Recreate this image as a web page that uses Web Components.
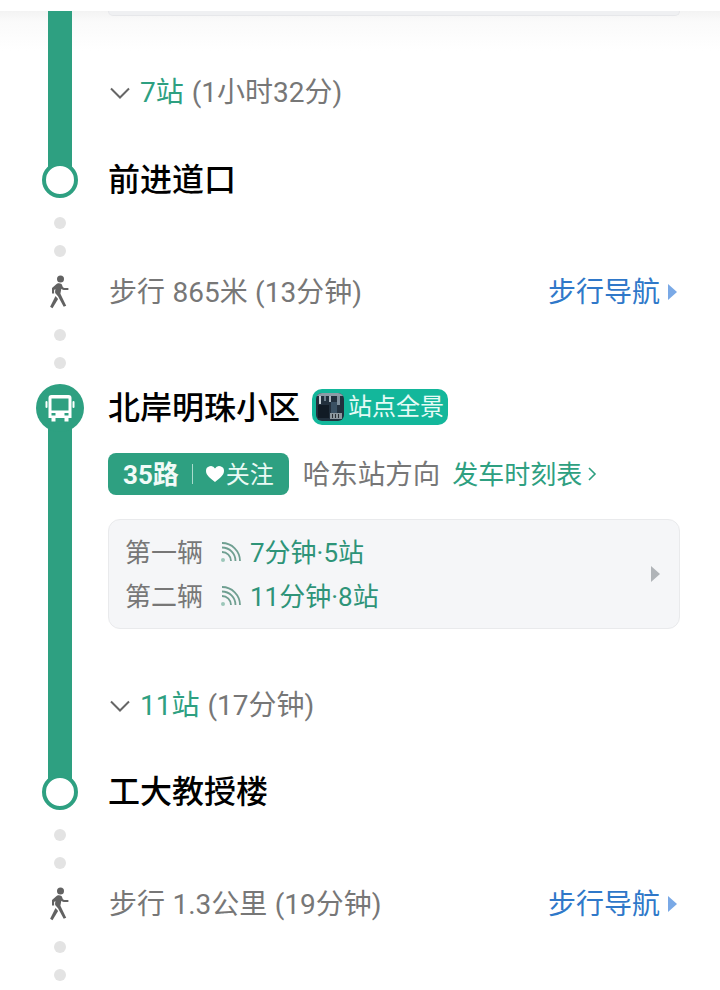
<!DOCTYPE html>
<html lang="zh">
<head>
<meta charset="utf-8">
<title>线路详情</title>
<style>
  html, body { margin: 0; padding: 0; background: #fff; }
  body { font-family: Roboto, "Noto Sans CJK SC", sans-serif; }
</style>
</head>
<body>
<route-page>
  <ride-leg count="7站" time="(1小时32分)" stub></ride-leg>
  <stop-row name="前进道口"></stop-row>
  <walk-leg text="步行 865米 (13分钟)"></walk-leg>
  <stop-row name="北岸明珠小区" kind="bus">
    <pano-badge>站点全景</pano-badge>
  </stop-row>
  <ride-leg count="11站" time="(17分钟)">
    <line-info line="35路" direction="哈东站方向"></line-info>
    <arrival-card>
      <arrival-row label="第一辆" eta="7分钟·5站"></arrival-row>
      <arrival-row label="第二辆" eta="11分钟·8站"></arrival-row>
    </arrival-card>
  </ride-leg>
  <stop-row name="工大教授楼"></stop-row>
  <walk-leg text="步行 1.3公里 (19分钟)"></walk-leg>
</route-page>

<script>
(function () {
  const FONT = 'Roboto, "Noto Sans CJK SC", sans-serif';

  class RoutePage extends HTMLElement {
    constructor() {
      super();
      this.attachShadow({ mode: 'open' }).innerHTML = `
        <style>
          :host {
            display: block; width: 720px; height: 990px; overflow: hidden;
            box-sizing: border-box; padding-top: 11px;
            font-family: ${FONT};
            background:
              linear-gradient(#f3f3f3, #fafafa 10px, #fff 40px) 0 11px / 100% 40px no-repeat,
              #fff;
          }
        </style>
        <slot></slot>`;
    }
  }

  class RideLeg extends HTMLElement {
    constructor() {
      super();
      const stub = this.hasAttribute('stub');
      this.attachShadow({ mode: 'open' }).innerHTML = `
        <style>
          :host { display: grid; grid-template-columns: 108px 1fr; }
          /* bar runs a little under the stop markers on both ends */
          .bar {
            width: 24px; margin: ${stub ? 0 : -6}px 0 0 48px; background: #2ea081;
            align-self: start; height: calc(100% + ${stub ? 6 : 12}px);
          }
          .body { padding: ${stub ? 0 : 21}px 40px ${stub ? 50 : 49}px 0; min-width: 0; }
          .stub {
            height: 5px; margin-bottom: 56px; box-sizing: border-box;
            background: #eff0f2; border: 1px solid #e6e7ea; border-top: 0;
            border-radius: 0 0 10px 10px;
          }
          .gap {
            display: flex; align-items: center; height: 40px; box-sizing: border-box; padding-bottom: 4px;
            font-size: 28px; color: #777; white-space: nowrap;
          }
          .gap svg { width: 24px; height: 14px; margin: 6px 8px 0 0; flex: none; }
          .count { color: #2ea081; margin-right: 8px; }
          ::slotted(arrival-card) { margin: 24px 0 56px; }
        </style>
        <div class="bar"></div>
        <div class="body">
          ${stub ? '<div class="stub"></div>' : ''}
          <slot></slot>
          <div class="gap">
            <svg viewBox="0 0 24 14"><path d="M3 2.500l9 9 9-9" fill="none" stroke="#666" stroke-width="2"/></svg>
            <span class="count">${this.getAttribute('count')}</span>
            <span>${this.getAttribute('time')}</span>
          </div>
        </div>`;
    }
  }

  class StopRow extends HTMLElement {
    constructor() {
      super();
      const bus = this.getAttribute('kind') === 'bus';
      const node = bus
        ? `<svg class="bus" viewBox="0 0 48 48">
             <circle cx="24" cy="24" r="24" fill="#2ea081"/>
             <path fill="#fff" fill-rule="evenodd" d="M15.500 11h17a3 3 0 0 1 3 3v20h-3v3.500h-4V34h-9v3.500h-4V34h-3V14a3 3 0 0 1 3-3zM15.500 14.500v12h17v-12zM15.500 29v2.500h4V29zM28.500 29v2.500h4V29z"/>
             <rect x="9.500" y="17" width="2" height="7" rx="1" fill="#fff"/>
             <rect x="36.500" y="17" width="2" height="7" rx="1" fill="#fff"/>
           </svg>`
        : '<span class="ring"></span>';
      const h = bus ? 48 : 36;
      this.attachShadow({ mode: 'open' }).innerHTML = `
        <style>
          :host { display: grid; grid-template: ${h}px / 108px 1fr; height: ${h}px; position: relative; }
          .node { display: flex; justify-content: center; align-items: center; width: 48px; margin-left: 36px; }
          .ring {
            width: 36px; height: 36px; box-sizing: border-box;
            border: 4px solid #2ea081; border-radius: 50%; background: #fff;
          }
          .bus { width: 48px; height: 48px; display: block; }
          .main { display: flex; align-items: center; gap: 12px; white-space: nowrap; }
          .name { font-size: 32px; line-height: 40px; font-weight: 500; color: #000; }
          ::slotted(pano-badge) { margin-bottom: 2px; }
        </style>
        <div class="node">${node}</div>
        <div class="main">
          <span class="name">${this.getAttribute('name')}</span>
          <slot></slot>
        </div>`;
    }
  }

  class WalkLeg extends HTMLElement {
    constructor() {
      super();
      this.attachShadow({ mode: 'open' }).innerHTML = `
        <style>
          :host { display: block; padding: 19px 43px 15px 0; }
          .dots { display: flex; flex-direction: column; gap: 16px; width: 12px; margin-left: 54px; }
          .dots i { display: block; width: 12px; height: 12px; border-radius: 50%; background: #e3e3e3; }
          .row {
            display: grid; grid-template: 40px / 108px 1fr auto; align-items: center;
            height: 40px; margin: 15px 0 17px; white-space: nowrap;
          }
          .row svg { width: 28px; height: 34px; margin-left: 46px; display: block; }
          .text { font-size: 28px; color: #777; padding-bottom: 4px; margin-left: 1px; word-spacing: .5px; }
          .link { display: flex; align-items: center; font-size: 28px; color: #2f78c9; padding-bottom: 4px; }
          .link i {
            display: block; width: 0; height: 0; margin: 4px 0 0 8px;
            border-left: 9px solid #7aa9e6; border-top: 8px solid transparent; border-bottom: 8px solid transparent;
          }
        </style>
        <div class="dots"><i></i><i></i></div>
        <div class="row">
          <svg viewBox="0 0 28 34">
            <circle cx="14.500" cy="4" r="3.500" fill="#626262"/>
            <path fill="#626262" d="M10 9.500c1.200-1.400 3.500-1.700 5-.7 1 .7 1.300 1.900 1.700 3 .3.800.9 1.100 1.700 1.100h4v2h-4.700c-1 0-1.800-.5-2.400-1.200l-.9 5 5.800 12 -2.500 1.100-5.700-10.600-2.200-2.500c-.7-.8-.8-1.500-.7-2.300l.3-2.500-1.300 1v3.500H6v-5.300z"/>
            <path fill="#626262" d="M9.500 21l2.600 2.900-5.600 9.400-2.400-1.500z"/>
          </svg>
          <span class="text">${this.getAttribute('text')}</span>
          <span class="link">步行导航<i></i></span>
        </div>
        <div class="dots"><i></i><i></i></div>`;
    }
  }

  class PanoBadge extends HTMLElement {
    constructor() {
      super();
      this.attachShadow({ mode: 'open' }).innerHTML = `
        <style>
          :host {
            display: flex; align-items: center; height: 36px; box-sizing: border-box;
            padding: 0 4px; border-radius: 10px; background: #13b79b;
            color: #e6fbf6; font-size: 24px; line-height: 36px; white-space: nowrap;
          }
          svg { width: 28px; height: 28px; display: block; margin-right: 4px; border-radius: 6px; }
        </style>
        <svg viewBox="0 0 28 28">
          <rect width="28" height="28" fill="#22303d"/>
          <rect width="28" height="3" fill="#8d9ba6"/>
          <rect x="3" y="3" width="2" height="8" fill="#c4ced5"/>
          <rect x="8" y="3" width="2" height="5" fill="#6f808d"/>
          <rect x="13" y="3" width="2" height="6" fill="#aab6bf"/>
          <rect x="21" y="3" width="3" height="9" fill="#7f909c"/>
          <rect x="2" y="12" width="11" height="13" fill="#111b25"/>
          <rect x="15" y="9" width="6" height="11" fill="#3a5163"/>
          <rect x="14" y="20" width="12" height="6" fill="#8b969d"/>
          <rect x="16" y="21" width="1" height="4" fill="#2a2f33"/>
          <rect x="19" y="21" width="1" height="4" fill="#2a2f33"/>
          <rect x="22" y="21" width="1" height="4" fill="#2a2f33"/>
        </svg>
        <slot></slot>`;
    }
  }

  class LineInfo extends HTMLElement {
    constructor() {
      super();
      this.attachShadow({ mode: 'open' }).innerHTML = `
        <style>
          :host { display: flex; align-items: center; height: 42px; white-space: nowrap; }
          .chip {
            display: flex; align-items: center; height: 42px; box-sizing: border-box;
            padding: 0 15px 4px 15px; border-radius: 8px; background: #2ea081; color: #fff;
          }
          .line { font-size: 26px; font-weight: 700; color: #f2fbf8; }
          .sep { width: 1px; height: 20px; background: #a9dccd; margin: 4px 13px 0; }
          .chip svg { width: 18px; height: 16px; display: block; margin: 4px 2px 0 0; }
          .follow { font-size: 24px; color: #eafaf5; }
          .dir { font-size: 27.500px; color: #777; margin: 0 12px 0 14px; padding-bottom: 4px; }
          .table { display: flex; align-items: center; font-size: 26px; color: #2ea081; padding-bottom: 4px; }
          .table svg { width: 10px; height: 16px; margin: 3px 0 0 5px; display: block; }
        </style>
        <div class="chip">
          <span class="line">${this.getAttribute('line')}</span>
          <span class="sep"></span>
          <svg viewBox="0 0 18 16"><path fill="#fff" d="M9 16C5 12.800 0 9.500 0 5a4.800 4.800 0 0 1 9-2.400A4.800 4.800 0 0 1 18 5c0 4.500-5 7.800-9 11z"/></svg>
          <span class="follow">关注</span>
        </div>
        <span class="dir">${this.getAttribute('direction')}</span>
        <span class="table">发车时刻表<svg viewBox="0 0 10 16"><path d="M2 2l6 6-6 6" fill="none" stroke="#2ea081" stroke-width="1.600"/></svg></span>`;
    }
  }

  class ArrivalCard extends HTMLElement {
    constructor() {
      super();
      this.attachShadow({ mode: 'open' }).innerHTML = `
        <style>
          :host {
            display: flex; align-items: center; height: 110px; box-sizing: border-box;
            padding: 0 18px 0 16px; background: #f5f6f8; border: 1px solid #e9eaec; border-radius: 12px;
          }
          .rows { flex: 1; display: flex; flex-direction: column; gap: 4px; }
          i {
            display: block; width: 0; height: 0;
            border-left: 9px solid #b0b4b8; border-top: 8px solid transparent; border-bottom: 8px solid transparent;
            margin-right: 1px;
          }
        </style>
        <div class="rows"><slot></slot></div>
        <i></i>`;
    }
  }

  class ArrivalRow extends HTMLElement {
    constructor() {
      super();
      this.attachShadow({ mode: 'open' }).innerHTML = `
        <style>
          :host { display: flex; align-items: center; height: 40px; font-size: 26px; white-space: nowrap; }
          .label { color: #777; width: 95px; padding-bottom: 4px; }
          svg { width: 22px; height: 22px; display: block; margin-right: 8px; }
          .eta { color: #2e9478; padding-bottom: 4px; }
        </style>
        <span class="label">${this.getAttribute('label')}</span>
        <svg viewBox="0 0 22 22" fill="none" stroke="#6f9f91" stroke-width="1.800">
          <circle cx="3" cy="19" r="2" fill="#9cc7ba" stroke="none"/>
          <path d="M2 11a9 9 0 0 1 9 9"/>
          <path d="M2 6.500A13.500 13.500 0 0 1 15.500 20"/>
          <path d="M2 2a18 18 0 0 1 18 18"/>
        </svg>
        <span class="eta">${this.getAttribute('eta')}</span>`;
    }
  }

  customElements.define('route-page', RoutePage);
  customElements.define('ride-leg', RideLeg);
  customElements.define('stop-row', StopRow);
  customElements.define('walk-leg', WalkLeg);
  customElements.define('pano-badge', PanoBadge);
  customElements.define('line-info', LineInfo);
  customElements.define('arrival-card', ArrivalCard);
  customElements.define('arrival-row', ArrivalRow);
})();
</script>
</body>
</html>
